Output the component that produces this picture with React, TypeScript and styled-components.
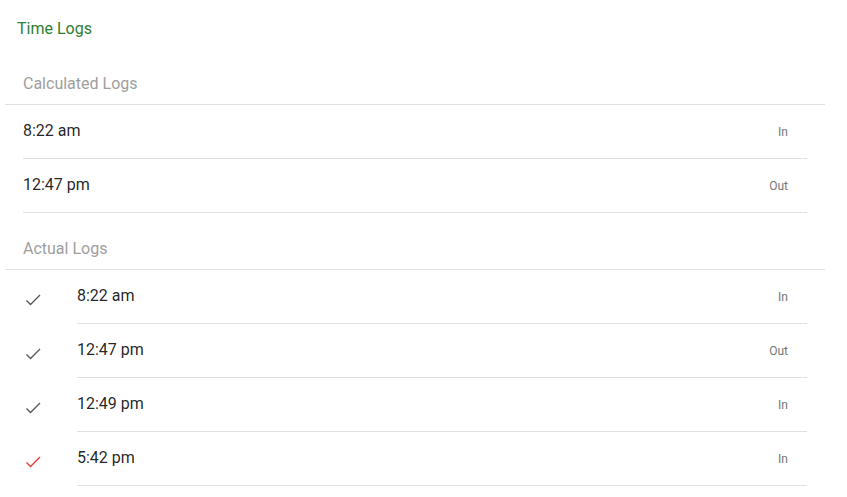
import React from "react";
import styled, { createGlobalStyle } from "styled-components";

const Global = createGlobalStyle`
  html, body { margin: 0; padding: 0; background: #fff; }
  body { font-family: Roboto, "Noto Sans", "Liberation Sans", sans-serif; }
`;

const Page = styled.div`
  width: 847px;
  display: flex;
  flex-direction: column;
`;

const Title = styled.div`
  height: 48px;
  box-sizing: border-box;
  padding: 17px 0 0 17px;
  font-size: 16px;
  line-height: 24px;
  color: #2e7d32;
`;

const SectionHeader = styled.div`
  margin: 0 22px 0 5px;
  padding: 24px 0 8px 18px;
  font-size: 16px;
  line-height: 24px;
  color: #9e9e9e;
  border-bottom: 1px solid #e0e0e0;
`;

const List = styled.div`
  display: flex;
  flex-direction: column;
  padding-left: 23px;
  width: 784px;
`;

const Row = styled.div`
  display: flex;
  align-items: stretch;
  height: 54px;
`;

const IconCell = styled.div`
  width: 54px;
  flex: none;
  display: flex;
  align-items: center;
  padding-top: 3px;
  box-sizing: border-box;
`;

const Body = styled.div`
  flex: 1;
  display: flex;
  align-items: center;
  justify-content: space-between;
  border-bottom: 1px solid #e0e0e0;
  padding-right: 19px;
  padding-bottom: 2px;
`;

const Time = styled.span`
  font-size: 16px;
  color: rgba(0, 0, 0, 0.87);
`;

const Kind = styled.span`
  font-size: 12px;
  color: #757575;
  padding-top: 2px;
`;

const Check = ({ color }: { color: string }) => (
  <svg width="20" height="16" viewBox="0 0 20 16" fill="none">
    <path d="M3.5 9.5 L7.5 13.5 L17 4" stroke={color} strokeWidth="1.3" />
  </svg>
);

const calculated = [
  { time: "8:22 am", kind: "In" },
  { time: "12:47 pm", kind: "Out" },
];

const actual = [
  { time: "8:22 am", kind: "In", ok: true },
  { time: "12:47 pm", kind: "Out", ok: true },
  { time: "12:49 pm", kind: "In", ok: true },
  { time: "5:42 pm", kind: "In", ok: false },
];

export default function App() {
  return (
    <Page>
      <Global />
      <Title>Time Logs</Title>
      <SectionHeader>Calculated Logs</SectionHeader>
      <List>
        {calculated.map((r, i) => (
          <Row key={i}>
            <Body>
              <Time>{r.time}</Time>
              <Kind>{r.kind}</Kind>
            </Body>
          </Row>
        ))}
      </List>
      <SectionHeader>Actual Logs</SectionHeader>
      <List>
        {actual.map((r, i) => (
          <Row key={i}>
            <IconCell>
              <Check color={r.ok ? "#555555" : "#e53935"} />
            </IconCell>
            <Body>
              <Time>{r.time}</Time>
              <Kind>{r.kind}</Kind>
            </Body>
          </Row>
        ))}
      </List>
    </Page>
  );
}
